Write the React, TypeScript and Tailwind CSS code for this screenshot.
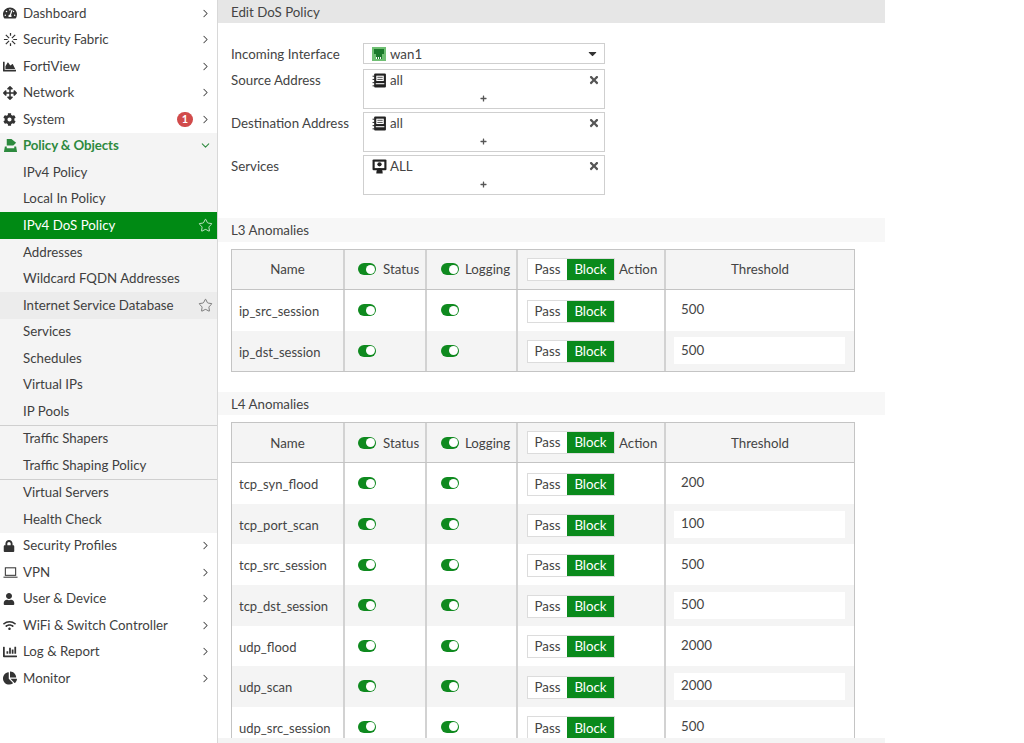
import { ChevronDown, ChevronRight, Star } from 'lucide-react';
import type { ReactNode } from 'react';
import {
  FaArrowsAlt,
  FaCaretDown,
  FaChartArea,
  FaChartBar,
  FaChartPie,
  FaCog,
  FaLock,
  FaPlus,
  FaTachometerAlt,
  FaTimes,
  FaUser,
  FaWifi,
} from 'react-icons/fa';

function FabricIcon() {
  return (
    <svg viewBox="0 0 16 16" className="h-[15px] w-[15px]" stroke="currentColor" strokeWidth="1.3" fill="none">
      <path d="M3 3l3.5 3.5M13 3L9.5 6.5M3 13l3.5-3.5M13 13L9.5 9.5M1 8h4M11 8h4M8 1v3M8 12v3" />
    </svg>
  );
}

function PolicyIcon() {
  return (
    <svg viewBox="0 0 16 16" className="h-[15px] w-[15px]" fill="currentColor">
      <path d="M4 1h5l5 4-3 3H4z" />
      <path d="M2 9h2v2h8V9h2l1 6H1z" />
    </svg>
  );
}

function LaptopIcon() {
  return (
    <svg viewBox="0 0 16 16" className="h-[15px] w-[15px]" stroke="currentColor" strokeWidth="1.1" fill="none">
      <rect x="2.5" y="3" width="11" height="8" />
      <path d="M0.5 13h15" />
    </svg>
  );
}

function PortIcon() {
  return (
    <svg viewBox="0 0 14 14" className="h-[14px] w-[14px]">
      <rect width="14" height="14" fill="#6fbf73" />
      <path d="M2 2h10v5h-2v5H4V7H2z" fill="#1c7a2c" />
      <path d="M4 10h1v2H4zM6 10h1v2H6zM8 10h1v2H8z" fill="#fff" />
    </svg>
  );
}

function AddressIcon() {
  return (
    <svg viewBox="0 0 14 14" className="h-[15px] w-[15px]">
      <rect x="2" y="0.5" width="11" height="13" rx="1" fill="#222" />
      <rect x="4" y="2.5" width="7" height="5" fill="#fff" />
      <path d="M5 4h5M5 6h5" stroke="#333" strokeWidth="0.8" />
      <rect x="3.5" y="9.5" width="8" height="1" fill="#fff" />
      <path d="M0.5 3h2M0.5 6h2M0.5 9h2M0.5 12h2" stroke="#222" strokeWidth="0.9" />
    </svg>
  );
}

function ServiceIcon() {
  return (
    <svg viewBox="0 0 14 14" className="h-[15px] w-[15px]">
      <rect x="0.5" y="0.5" width="13" height="10" rx="1" fill="#222" />
      <rect x="2.5" y="2.5" width="9" height="6" fill="#fff" />
      <circle cx="7" cy="5" r="2" fill="#222" />
      <path d="M4 13.5c0-3 1-5 3-5s3 2 3 5z" fill="#222" />
    </svg>
  );
}

function MenuRow({ icon, label, badge }: { icon: ReactNode; label: string; badge?: string }) {
  return (
    <div className="flex h-[26.5px] items-center pr-[5px] text-[#3f3f3f]">
      <span className="flex w-[23px] pl-[3px] text-[#333]">{icon}</span>
      <span className="flex-1 pt-[1px]">{label}</span>
      {badge && (
        <span className="mr-[6px] flex h-[15px] w-[16px] items-center justify-center rounded-full bg-[#d14b4b] text-[11px] font-bold text-white">
          {badge}
        </span>
      )}
      <ChevronRight className="h-[13px] w-[13px] text-[#444]" strokeWidth={1.9} />
    </div>
  );
}

function SubRow({ label, className }: { label: string; className?: string }) {
  return (
    <div className={`flex h-[26.5px] items-center pl-[23px] pr-[3px] text-[#3f3f3f] ${className ?? ''}`}>
      <span className="flex-1 pt-[1px]">{label}</span>
    </div>
  );
}

function Sidebar() {
  return (
    <aside className="h-[743px] w-[218px] shrink-0 border-r border-[#d8d8d8] bg-white">
      <MenuRow icon={<FaTachometerAlt size={14} />} label="Dashboard" />
      <MenuRow icon={<FabricIcon />} label="Security Fabric" />
      <MenuRow icon={<FaChartArea size={13} />} label="FortiView" />
      <MenuRow icon={<FaArrowsAlt size={14} />} label="Network" />
      <MenuRow icon={<FaCog size={13} />} label="System" badge="1" />
      <div className="bg-[#f4f4f4]">
        <div className="flex h-[26.5px] items-center pr-[5px] font-bold text-[#2d8a3e]">
          <span className="flex w-[23px] pl-[3px]">
            <PolicyIcon />
          </span>
          <span className="flex-1 pt-[1px] tracking-[-0.1px]">Policy &amp; Objects</span>
          <ChevronDown className="h-[13px] w-[13px]" strokeWidth={1.9} />
        </div>
        <SubRow label="IPv4 Policy" />
        <SubRow label="Local In Policy" />
        <div className="flex h-[27px] items-center bg-[#008a14] pl-[23px] pr-[4px] text-white">
          <span className="flex-1 pt-[1px]">IPv4 DoS Policy</span>
          <Star className="h-[15px] w-[15px]" strokeWidth={1.2} />
        </div>
        <SubRow label="Addresses" />
        <SubRow label="Wildcard FQDN Addresses" />
        <div className="flex h-[26.5px] items-center bg-[#ececec] pl-[23px] pr-[4px] text-[#3f3f3f]">
          <span className="flex-1 pt-[1px]">Internet Service Database</span>
          <Star className="h-[15px] w-[15px] text-[#555]" strokeWidth={1.2} />
        </div>
        <SubRow label="Services" />
        <SubRow label="Schedules" />
        <SubRow label="Virtual IPs" />
        <SubRow label="IP Pools" />
        <div className="border-t border-[#cfcfcf]">
          <SubRow label="Traffic Shapers" />
          <SubRow label="Traffic Shaping Policy" />
        </div>
        <div className="border-t border-[#cfcfcf]">
          <SubRow label="Virtual Servers" />
          <SubRow label="Health Check" />
        </div>
      </div>
      <MenuRow icon={<FaLock size={12} />} label="Security Profiles" />
      <MenuRow icon={<LaptopIcon />} label="VPN" />
      <MenuRow icon={<FaUser size={12} />} label="User & Device" />
      <MenuRow icon={<FaWifi size={13} />} label="WiFi & Switch Controller" />
      <MenuRow icon={<FaChartBar size={14} />} label="Log & Report" />
      <MenuRow icon={<FaChartPie size={14} />} label="Monitor" />
    </aside>
  );
}

function Toggle() {
  return (
    <span className="relative inline-block h-[12px] w-[18px] rounded-full bg-[#0f8a1f]">
      <span className="absolute right-[1.5px] top-[1.5px] h-[9px] w-[9px] rounded-full bg-white" />
    </span>
  );
}

function PassBlock() {
  return (
    <span className="inline-flex h-[21px] shadow-[0_0_0_1px_#dcdcdc]">
      <span className="flex w-[39px] items-center justify-center bg-white pt-[1px] text-[#444]">Pass</span>
      <span className="flex w-[47px] items-center justify-center bg-[#0a8a1c] pt-[1px] text-white">Block</span>
    </span>
  );
}

function AddressBox({ icon, value }: { icon: ReactNode; value: string }) {
  return (
    <div className="h-[40px] w-[242px] border border-[#cfcfcf] bg-white">
      <div className="flex h-[21px] items-center pl-[8px] pr-[4px]">
        {icon}
        <span className="ml-[3px] flex-1 pt-[2px]">{value}</span>
        <FaTimes className="text-[#555]" size={12} />
      </div>
      <div className="flex h-[16px] items-center justify-center pr-[2px] text-[#555]">
        <FaPlus size={7} />
      </div>
    </div>
  );
}

function SectionBar({ title, className }: { title: string; className: string }) {
  return <div className={`flex items-center bg-[#f7f7f7] pl-[13px] pt-[2px] text-[#444] ${className}`}>{title}</div>;
}

const colClass = 'grid grid-cols-[111px_82px_91px_148px_1fr]';
const cellClass = 'flex items-center border-l-2 border-[#d2d2d2]';

function AnomalyTable({ rows }: { rows: { name: string; threshold: string }[] }) {
  return (
    <div className="w-[624px] border border-[#c4c4c4] bg-white">
      <div className={`${colClass} h-[40px] border-b border-[#c4c4c4] bg-[#f4f4f4]`}>
        <div className="flex items-center justify-center pt-[2px]">Name</div>
        <div className={`${cellClass} gap-[7px] pl-[13px]`}>
          <Toggle />
          <span className="pt-[2px]">Status</span>
        </div>
        <div className={`${cellClass} gap-[6px] pl-[14px]`}>
          <Toggle />
          <span className="pt-[2px]">Logging</span>
        </div>
        <div className={`${cellClass} gap-[5px] pl-[10px]`}>
          <PassBlock />
          <span className="pt-[2px]">Action</span>
        </div>
        <div className={`${cellClass} justify-center pt-[2px]`}>Threshold</div>
      </div>
      {rows.map((row, i) => (
        <div key={row.name} className={`${colClass} h-[40.6px] ${i % 2 === 1 ? 'bg-[#f4f4f4]' : 'bg-white'}`}>
          <div className="flex items-center pl-[7px] pt-[3px] text-[13px]">{row.name}</div>
          <div className={`${cellClass} pl-[13px]`}>
            <span className="flex">
              <Toggle />
            </span>
          </div>
          <div className={`${cellClass} pl-[14px]`}>
            <span className="flex">
              <Toggle />
            </span>
          </div>
          <div className={`${cellClass} pl-[10px] pt-[2px]`}>
            <PassBlock />
          </div>
          <div className={`${cellClass} pl-[8px] pr-[9px]`}>
            <div className={`flex h-[27px] w-full items-center pl-[7px] ${i % 2 === 1 ? 'bg-white' : ''}`}>
              {row.threshold}
            </div>
          </div>
        </div>
      ))}
    </div>
  );
}

const l3Rows = [
  { name: 'ip_src_session', threshold: '500' },
  { name: 'ip_dst_session', threshold: '500' },
];

const l4Rows = [
  { name: 'tcp_syn_flood', threshold: '200' },
  { name: 'tcp_port_scan', threshold: '100' },
  { name: 'tcp_src_session', threshold: '500' },
  { name: 'tcp_dst_session', threshold: '500' },
  { name: 'udp_flood', threshold: '2000' },
  { name: 'udp_scan', threshold: '2000' },
  { name: 'udp_src_session', threshold: '500' },
];

export default function App() {
  return (
    <div className="flex h-[743px] w-[1024px] overflow-hidden bg-white font-['Lato','Open_Sans',sans-serif] text-[13.3px] text-[#444]">
      <Sidebar />
      <main className="w-[667px] shrink-0">
        <div className="flex h-[23px] items-center bg-[#e6e6e6] pl-[13px] pt-[2px] text-[#444]">Edit DoS Policy</div>

        {/* Form */}
        <div className="mt-[20px] pl-[13px]">
          <div className="flex items-center">
            <span className="w-[132px] pt-[2px]">Incoming Interface</span>
            <div className="flex h-[21px] w-[242px] items-center border border-[#cfcfcf] pl-[8px] pr-[5px]">
              <PortIcon />
              <span className="ml-[4px] flex-1 pt-[2px]">wan1</span>
              <FaCaretDown className="text-[#333]" size={13} />
            </div>
          </div>
          <div className="mt-[4px] flex">
            <span className="w-[132px] pt-[2px]">Source Address</span>
            <AddressBox icon={<AddressIcon />} value="all" />
          </div>
          <div className="mt-[3px] flex">
            <span className="w-[132px] pt-[2px]">Destination Address</span>
            <AddressBox icon={<AddressIcon />} value="all" />
          </div>
          <div className="mt-[3px] flex">
            <span className="w-[132px] pt-[2px]">Services</span>
            <AddressBox icon={<ServiceIcon />} value="ALL" />
          </div>
        </div>

        <div className="mt-[23px]">
          <SectionBar title="L3 Anomalies" className="h-[24px]" />
        </div>
        <div className="mt-[7px] pl-[13px]">
          <AnomalyTable rows={l3Rows} />
        </div>

        <div className="mt-[20px]">
          <SectionBar title="L4 Anomalies" className="h-[23px]" />
        </div>
        <div className="mt-[7px] h-[316px] overflow-hidden pl-[13px]">
          <AnomalyTable rows={l4Rows} />
        </div>
        <div className="h-[6px] bg-[#f4f4f4]" />
      </main>
    </div>
  );
}
